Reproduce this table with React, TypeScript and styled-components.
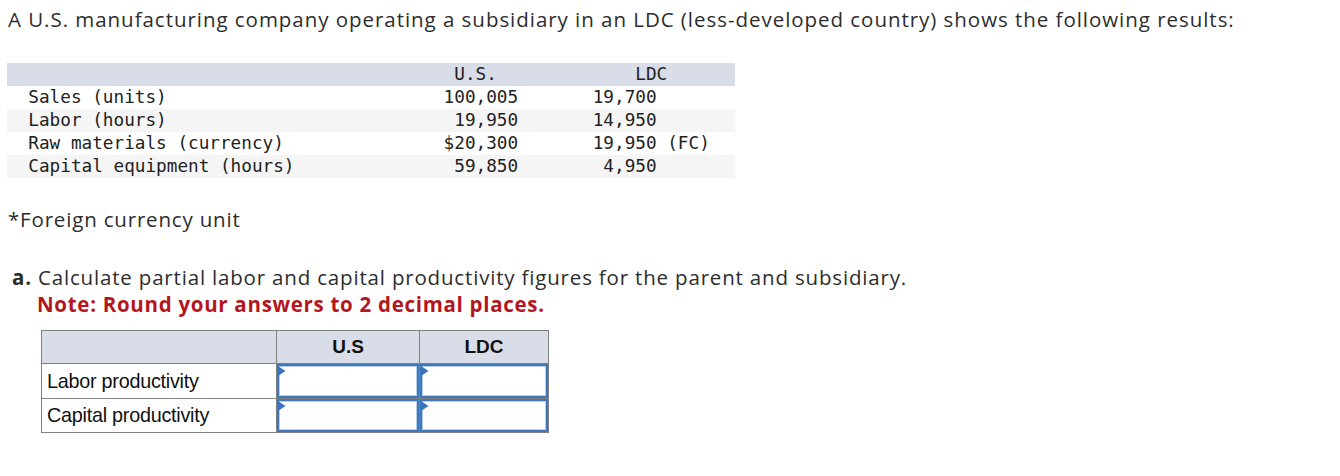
import React from 'react'
import styled, { createGlobalStyle } from 'styled-components'

const GlobalStyle = createGlobalStyle`
  body {
    margin: 0;
    background: #fff;
    font-family: "Open Sans", "Noto Sans", sans-serif;
    color: #2d2d2d;
  }
`

const Page = styled.div`
  padding: 7px 8px 0 8px;
  width: 1340px;
  box-sizing: border-box;
`

const Text = styled.p`
  margin: 0;
  font-size: 20.5px;
  line-height: 24px;
  letter-spacing: 0.82px;
  white-space: nowrap;
`

const Lead = styled(Text)`
  letter-spacing: 0.96px;
`

const DataBlock = styled.div`
  margin: 32px 0 0 -1px;
  width: 728px;
  font-family: "DejaVu Sans Mono", "Liberation Mono", monospace;
  font-size: 17.7px;
  color: #222;
`

const DataRow = styled.div<{ $tone: 'head' | 'plain' | 'alt' }>`
  height: 23px;
  line-height: 23px;
  white-space: pre;
  overflow: hidden;
  background: ${(p) => (p.$tone === 'head' ? '#d9dde7' : p.$tone === 'alt' ? '#f5f5f5' : '#fff')};
`

const Footnote = styled(Text)`
  margin-top: 29px;
`

const Question = styled(Text)`
  margin: 34px 0 0 4px;

  b {
    font-weight: 700;
  }
`

const Note = styled(Text)`
  margin: 3px 0 0 29px;
  font-weight: 700;
  letter-spacing: 0.7px;
  color: #b3161c;
`

const AnswerTable = styled.table`
  margin: 14px 0 0 33px;
  border-collapse: collapse;
  font-family: "Liberation Sans", Arial, sans-serif;
  color: #111;
`

const HeadCell = styled.th<{ $w: number }>`
  width: ${(p) => p.$w}px;
  height: 33px;
  padding: 0;
  background: #d9dde7;
  border: 1px solid #808080;
  font-size: 19px;
  font-weight: 700;
  text-align: center;
  box-sizing: border-box;
`

const LabelCell = styled.td<{ $h: number }>`
  height: ${(p) => p.$h}px;
  padding: 0 0 0 5px;
  border: 1px solid #808080;
  font-size: 19.8px;
  letter-spacing: -0.25px;
  box-sizing: border-box;
`

const InputCell = styled.td`
  padding: 0;
  border: 1px solid #808080;
  position: relative;
  vertical-align: top;
`

const Field = styled.input<{ $h: number }>`
  display: block;
  width: 100%;
  height: ${(p) => p.$h}px;
  margin: 0;
  box-sizing: border-box;
  border: 2px solid #3f77bd;
  box-shadow: inset 0 0 0 1px #b8cfeb;
  outline: none;
  background: #fff;
`

const Flag = styled.svg`
  position: absolute;
  z-index: 1;
  left: 1px;
  top: 2px;
  display: block;
  pointer-events: none;
`

const Marker = () => (
  <Flag width="8" height="10" viewBox="0 0 8 10">
    <path d="M0 0 L7.5 5 L0 10 Z" fill="#3a74bd" />
  </Flag>
)

const pad = (s: string, n: number) => s + ' '.repeat(Math.max(0, n - s.length))
const lpad = (s: string, n: number) => ' '.repeat(Math.max(0, n - s.length)) + s

const data = [
  { label: 'Sales (units)', us: '100,005', ldc: '19,700' },
  { label: 'Labor (hours)', us: '19,950', ldc: '14,950' },
  { label: 'Raw materials (currency)', us: '$20,300', ldc: '19,950 (FC)' },
  { label: 'Capital equipment (hours)', us: '59,850', ldc: ' 4,950' },
]

const rows = [
  { name: 'Labor productivity', h: 34 },
  { name: 'Capital productivity', h: 33 },
]

export default function App() {
  return (
    <Page>
      <GlobalStyle />
      <Lead>
        A U.S. manufacturing company operating a subsidiary in an LDC (less-developed country) shows the following results:
      </Lead>

      <DataBlock>
        <DataRow $tone="head">{pad('', 42) + pad('U.S.', 17) + 'LDC'}</DataRow>
        {data.map((d, i) => (
          <DataRow key={d.label} $tone={i % 2 === 1 ? 'alt' : 'plain'}>
            {'  ' + pad(d.label, 39) + lpad(d.us, 7) + '       ' + d.ldc}
          </DataRow>
        ))}
      </DataBlock>

      <Footnote>*Foreign currency unit</Footnote>

      <Question>
        <b>a.</b> Calculate partial labor and capital productivity figures for the parent and subsidiary.
      </Question>
      <Note>Note: Round your answers to 2 decimal places.</Note>

      <AnswerTable>
        <thead>
          <tr>
            <HeadCell $w={235} />
            <HeadCell $w={143}>U.S</HeadCell>
            <HeadCell $w={129}>LDC</HeadCell>
          </tr>
        </thead>
        <tbody>
          {rows.map((r) => (
            <tr key={r.name}>
              <LabelCell $h={r.h + 1}>{r.name}</LabelCell>
              <InputCell>
                <Field $h={r.h} type="text" aria-label={`${r.name} U.S`} />
                <Marker />
              </InputCell>
              <InputCell>
                <Field $h={r.h} type="text" aria-label={`${r.name} LDC`} />
                <Marker />
              </InputCell>
            </tr>
          ))}
        </tbody>
      </AnswerTable>
    </Page>
  )
}
